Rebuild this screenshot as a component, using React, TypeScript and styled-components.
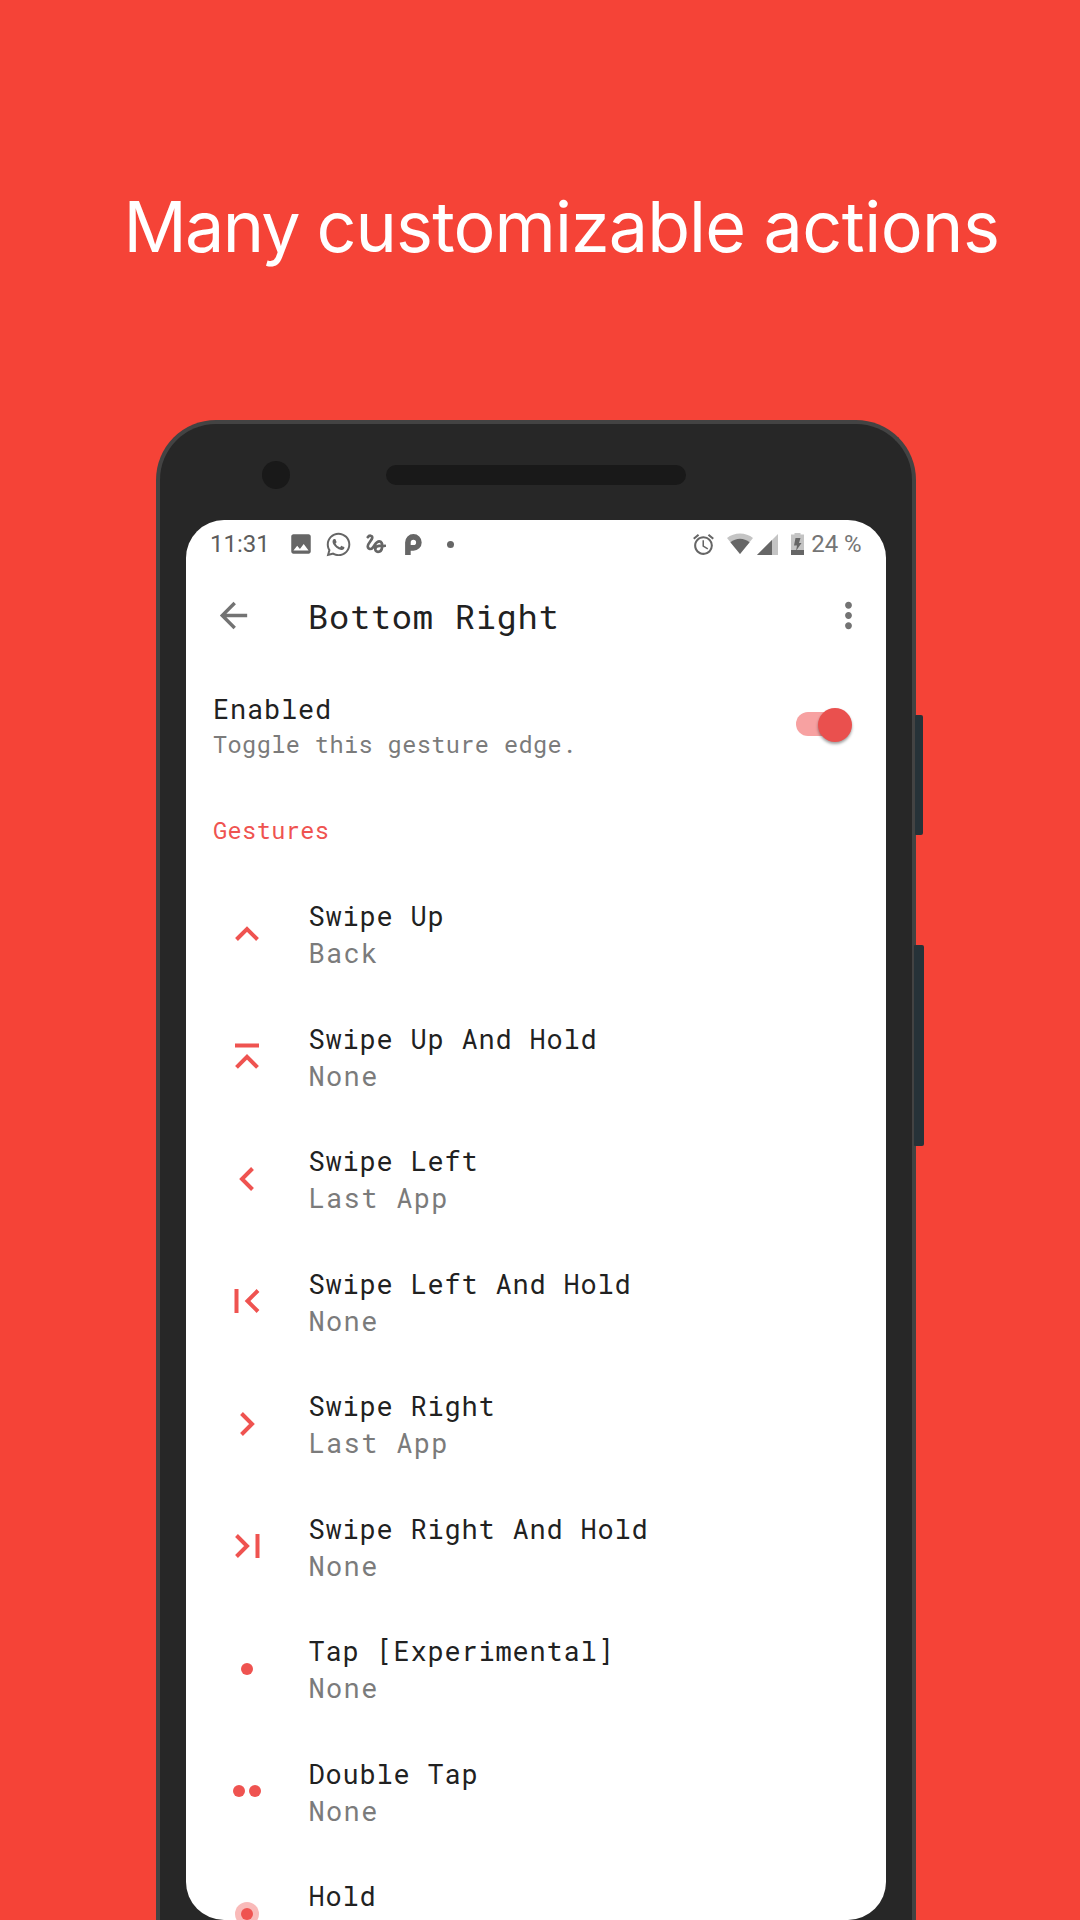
import React from 'react';
import styled, { createGlobalStyle } from 'styled-components';
import { FaWhatsapp } from 'react-icons/fa';
import { MdImage, MdAccessAlarm, MdArrowBack, MdMoreVert } from 'react-icons/md';

const mono = `'Roboto Mono', 'Liberation Mono', monospace`;
const accent = '#ef5350';

const Global = createGlobalStyle`
  * { box-sizing: border-box; }
  body { margin: 0; background: #f54337; }
`;

const Stage = styled.main`
  width: 1080px;
  height: 1920px;
  overflow: hidden;
  background: #f54337;
  display: flex;
  flex-direction: column;
`;

const Heading = styled.h1`
  margin: 0;
  height: 420px;
  flex: none;
  padding: 185px 0 0 123.5px;
  font: 400 70px/84px Inter, 'Open Sans', sans-serif;
  color: #fff;
  white-space: nowrap;
  display: flex;
`;

const Word = styled.span<{ $width: number; $spacing: number }>`
  width: ${(p) => p.$width}px;
  letter-spacing: ${(p) => p.$spacing}px;
`;

const Phone = styled.section`
  position: relative;
  flex: none;
  width: 760px;
  height: 1600px;
  margin-left: 156px;
  padding: 0 26px;
  border: 4px solid #434343;
  border-bottom: 0;
  border-radius: 60px 60px 0 0;
  background: #272727;
`;

const SideButton = styled.span<{ $top: number; $height: number; $left: number; $width: number }>`
  position: absolute;
  top: ${(p) => p.$top}px;
  left: ${(p) => p.$left}px;
  width: ${(p) => p.$width}px;
  height: ${(p) => p.$height}px;
  border-radius: 1px 2px 2px 1px;
  background: #263238;
`;

const Bezel = styled.div`
  height: 96px;
  display: flex;
  align-items: center;
  padding: 6px 0 0 75.5px;
`;

const Camera = styled.span`
  width: 28.5px;
  height: 28.5px;
  border-radius: 50%;
  background: #191919;
`;

const Speaker = styled.span`
  width: 300px;
  height: 20px;
  margin-left: 95.5px;
  border-radius: 10px;
  background: #191919;
`;

const Screen = styled.div`
  width: 700px;
  height: 1400px;
  overflow: hidden;
  border-radius: 38px;
  background: #fff;
`;

const StatusBar = styled.div`
  height: 48px;
  padding: 0 24.3px 0 24px;
  display: flex;
  align-items: center;
  justify-content: space-between;
  color: #666;
  font: 400 24px/48px Roboto, sans-serif;
`;

const StatusGroup = styled.div`
  display: flex;
  align-items: center;
  height: 48px;
`;

const Time = styled.span`
  width: 78.2px;
  color: #5c5c5c;
`;

const Percent = styled.span`
  margin-left: 7.5px;
  color: #757575;
`;

const Gap = styled.span<{ $w: number }>`
  width: ${(p) => p.$w}px;
`;

const AppBar = styled.header`
  height: 96px;
  display: flex;
  align-items: center;
  padding: 0 17px 2px 26.5px;
  color: #737373;
`;

const Title = styled.h2`
  flex: 1;
  margin: 0 0 0 54.5px;
  padding-top: 1px;
  font: 400 33.75px/48px ${mono};
  letter-spacing: 0.7px;
  color: #212121;
`;

const SettingRow = styled.div`
  height: 122px;
  display: flex;
  justify-content: space-between;
  padding: 27px 33px 0 27px;
`;

const Label = styled.div`
  font: 400 27px/36px ${mono};
  letter-spacing: 0.8px;
  color: #212121;
  white-space: pre;
`;

const Hint = styled.div`
  margin-top: 0.5px;
  font: 400 23.6px/32px ${mono};
  letter-spacing: 0.39px;
  color: #7b7b7b;
`;

const Switch = styled.div`
  width: 57px;
  height: 34px;
  margin-top: 17px;
  padding: 4px 0 6px;
`;

const Track = styled.div`
  height: 24px;
  width: 52px;
  border-radius: 12px;
  background: #f7a1a1;
  display: flex;
  align-items: center;
`;

const Knob = styled.div`
  flex: none;
  width: 34px;
  height: 34px;
  margin: 2px 0 0 22.4px;
  border-radius: 50%;
  background: #ea504e;
  box-shadow: 0 2px 3px rgba(0, 0, 0, 0.38);
`;

const Category = styled.div`
  height: 86px;
  padding: 28px 0 0 27px;
  font: 400 23.6px/32px ${mono};
  letter-spacing: 0.39px;
  color: ${accent};
`;

const List = styled.div`
  padding-top: 0.5px;
`;

const Row = styled.div`
  height: 122.5px;
  display: flex;
  align-items: center;
  padding-left: 37px;
`;

const RowText = styled.div`
  height: 72px;
  padding-top: 0.7px;
  margin-left: 37.5px;
`;

const Value = styled(Label)`
  margin-top: 1px;
  letter-spacing: 1.35px;
  color: #7b7b7b;
`;

type Kind = 'up' | 'upHold' | 'left' | 'leftHold' | 'right' | 'rightHold' | 'tap' | 'double' | 'hold';

const glyphs: Record<Kind, React.ReactNode> = {
  up: <path d="M13.5 29.5 24 19 34.5 29.5" />,
  upHold: <path d="M12 13.500H36M13.5 35.300 24 24.800 34.500 35.300" />,
  left: <path d="M29.500 13.500 19 24 29.500 34.500" />,
  leftHold: <path d="M13.500 12V36M35 13.500 24.500 24 35 34.500" />,
  right: <path d="M18.500 13.500 29 24 18.500 34.500" />,
  rightHold: <path d="M34.500 12V36M13.500 13.500 24 24 13.500 34.500" />,
  tap: <circle cx="24" cy="24" r="6" fill={accent} stroke="none" />,
  double: (
    <g fill={accent} stroke="none">
      <circle cx="16" cy="24" r="6" />
      <circle cx="32" cy="24" r="6" />
    </g>
  ),
  hold: (
    <g fill={accent} stroke="none">
      <circle cx="24" cy="24" r="12" opacity="0.4" />
      <circle cx="24" cy="24" r="6" />
    </g>
  ),
};

const GestureIcon = ({ kind }: { kind: Kind }) => (
  <svg width="48" height="48" viewBox="0 0 48 48" fill="none" stroke={accent} strokeWidth="4">
    {glyphs[kind]}
  </svg>
);

const Squiggle = () => (
  <svg width="20.5" height="20" viewBox="0 0 20.5 20" fill="none" stroke="#666" strokeWidth="2.700" strokeLinecap="round">
    <path d="M1.8 3.2C3.200 1 6.600 1.200 6.200 4C5.800 6.500 1.500 9.500 1.800 12.500C2 15.500 5 15.800 7 13.300C9 10.800 10.200 7.300 13.200 7.300C17.800 7.300 17 17.800 12 17.800C8.200 17.800 8.200 12.200 13 11.800C15.500 11.600 16 12.600 19 11.800" />
  </svg>
);

const Pin = () => (
  <svg width="17" height="21" viewBox="0 0 17 21" fill="none" stroke="#666">
    <path d="M2.900 21V8.400A5.500 5.500 0 1 1 8.400 13.900H5" strokeWidth="5.600" />
  </svg>
);

const Wifi = () => (
  <svg width="26" height="22" viewBox="0 0 26 22">
    <path d="M13 21 0 5C7-1 19-1 26 5Z" fill="#c4c4c4" />
    <path d="M13 21 3.400 9.200C9 4.500 17 4.500 22.600 9.200Z" fill="#666" />
  </svg>
);

const Signal = () => (
  <svg width="21" height="21" viewBox="0 0 21 21">
    <path d="M0 21 21 0V21Z" fill="#c4c4c4" />
    <path d="M0 21 15 6V21Z" fill="#666" />
  </svg>
);

const Battery = () => (
  <svg width="13" height="22" viewBox="0 0 13 22">
    <path d="M0 1.500H3.500V0H9.500V1.500H13V22H0Z" fill="#c4c4c4" />
    <path d="M0 17H13V22H0ZM4.500 5H9.500L8 10H10.500L5 18 6 12.500H3Z" fill="#666" />
  </svg>
);

const Dot = styled.span`
  width: 7px;
  height: 7px;
  border-radius: 50%;
  background: #666;
`;

const rows: { kind: Kind; label: string; value?: string }[] = [
  { kind: 'up', label: 'Swipe Up', value: 'Back' },
  { kind: 'upHold', label: 'Swipe Up And Hold', value: 'None' },
  { kind: 'left', label: 'Swipe Left', value: 'Last App' },
  { kind: 'leftHold', label: 'Swipe Left And Hold', value: 'None' },
  { kind: 'right', label: 'Swipe Right', value: 'Last App' },
  { kind: 'rightHold', label: 'Swipe Right And Hold', value: 'None' },
  { kind: 'tap', label: 'Tap [Experimental]', value: 'None' },
  { kind: 'double', label: 'Double Tap', value: 'None' },
  { kind: 'hold', label: 'Hold' },
];

export default function App() {
  return (
    <Stage>
      <Global />
      <Heading>
        <Word $width={193} $spacing={-1.7}>Many</Word>
        <Word $width={447} $spacing={-0.9}>customizable</Word>
        <Word $width={240} $spacing={-0.5}>actions</Word>
      </Heading>
      <Phone>
        <SideButton $top={290.5} $left={755} $width={8} $height={120.5} />
        <SideButton $top={521} $left={754} $width={10} $height={201} />
        <Bezel>
          <Camera />
          <Speaker />
        </Bezel>
        <Screen>
          <StatusBar>
            <StatusGroup>
              <Time>11:31</Time>
              <MdImage size={26} />
              <Gap $w={11.1} />
              <FaWhatsapp size={27} />
              <Gap $w={13.7} />
              <Squiggle />
              <Gap $w={18.5} />
              <Pin />
              <Gap $w={25} />
              <Dot />
            </StatusGroup>
            <StatusGroup>
              <MdAccessAlarm size={25} />
              <Gap $w={11} />
              <Wifi />
              <Gap $w={4} />
              <Signal />
              <Gap $w={13} />
              <Battery />
              <Percent>24 %</Percent>
            </StatusGroup>
          </StatusBar>
          <AppBar>
            <MdArrowBack size={41} />
            <Title>Bottom Right</Title>
            <MdMoreVert size={41} />
          </AppBar>
          <SettingRow>
            <div>
              <Label>Enabled</Label>
              <Hint>Toggle this gesture edge.</Hint>
            </div>
            <Switch>
              <Track>
                <Knob />
              </Track>
            </Switch>
          </SettingRow>
          <Category>Gestures</Category>
          <List>
            {rows.map((r) => (
              <Row key={r.label}>
                <GestureIcon kind={r.kind} />
                <RowText>
                  <Label>{r.label}</Label>
                  {r.value && <Value>{r.value}</Value>}
                </RowText>
              </Row>
            ))}
          </List>
        </Screen>
      </Phone>
    </Stage>
  );
}
